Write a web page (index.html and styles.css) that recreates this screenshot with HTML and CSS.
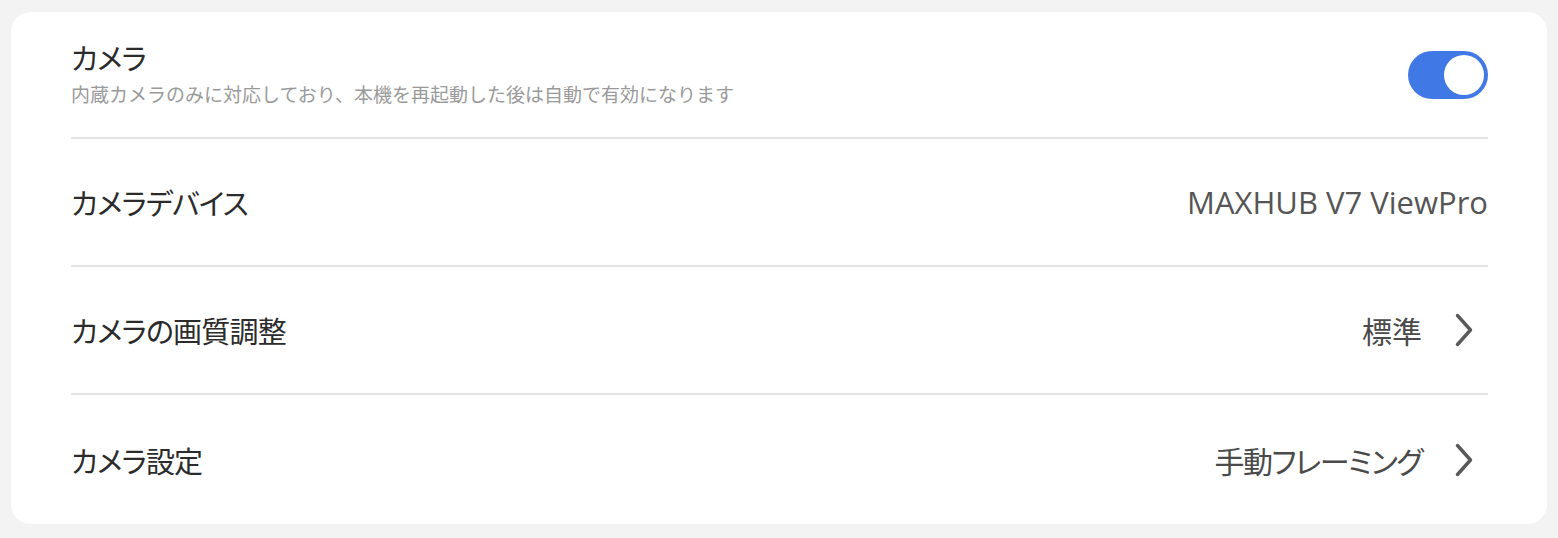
FILE: index.html
```html
<!DOCTYPE html>
<html lang="ja">
<head>
<meta charset="utf-8">
<link rel="stylesheet" href="styles.css">
</head>
<body>
<div class="card">
  <div class="row row-first">
    <div class="text-col">
      <div class="title">カメラ</div>
      <div class="subtitle">内蔵カメラのみに対応しており、本機を再起動した後は自動で有効になります</div>
    </div>
    <div class="toggle"><div class="knob"></div></div>
  </div>
  <div class="row">
    <div class="title">カメラデバイス</div>
    <div class="value latin">MAXHUB V7 ViewPro</div>
  </div>
  <div class="row">
    <div class="title">カメラの画質調整</div>
    <div class="value-wrap">
      <div class="value">標準</div>
      <svg class="chevron" width="20" height="34" viewBox="0 0 20 34"><path d="M3.5 2.5 L16.5 17 L3.5 31.5" fill="none" stroke="#5a5a5a" stroke-width="3.4" stroke-linecap="round" stroke-linejoin="round"/></svg>
    </div>
  </div>
  <div class="row row-last">
    <div class="title">カメラ設定</div>
    <div class="value-wrap">
      <div class="value narrow">手動フレーミング</div>
      <svg class="chevron" width="20" height="34" viewBox="0 0 20 34"><path d="M3.5 2.5 L16.5 17 L3.5 31.5" fill="none" stroke="#5a5a5a" stroke-width="3.4" stroke-linecap="round" stroke-linejoin="round"/></svg>
    </div>
  </div>
</div>
</body>
</html>
```

FILE: styles.css
```css
html, body {
  margin: 0;
  padding: 0;
  background: #f3f3f3;
}
body {
  padding: 12px 11px 14px 11px;
  font-family: "Noto Sans CJK JP", "Noto Sans", sans-serif;
  font-feature-settings: "palt";
}
.card {
  background: #ffffff;
  border-radius: 20px;
  padding: 0 59px 0 60px;
}
.row {
  display: flex;
  align-items: center;
  justify-content: space-between;
  height: 126px;
  border-bottom: 2px solid #e3e3e3;
}
.row-first {
  height: 125px;
}
.row-last {
  height: 129px;
  border-bottom: none;
}
.text-col {
  display: flex;
  flex-direction: column;
  gap: 4px;
  padding-bottom: 5px;
}
.title {
  font-size: 29px;
  line-height: 40px;
  color: #2b2b2b;
  letter-spacing: -0.8px;
}
.subtitle {
  font-size: 19px;
  line-height: 26px;
  color: #9a9a9a;
  font-feature-settings: normal;
}
.value {
  font-size: 30px;
  line-height: 40px;
  color: #4a4a4a;
}
.narrow {
  letter-spacing: -1.5px;
}
.latin {
  font-family: "Open Sans", "Noto Sans", sans-serif;
  font-size: 31px;
  color: #555555;
}
.value-wrap {
  display: flex;
  align-items: center;
}
.chevron {
  display: block;
  margin-left: 32px;
  margin-right: 14px;
}
.toggle {
  width: 80px;
  height: 48px;
  border-radius: 24px;
  background: #4079e6;
  display: flex;
  align-items: center;
  justify-content: flex-end;
  padding: 0 4px;
  box-sizing: border-box;
}
.knob {
  width: 40px;
  height: 40px;
  border-radius: 50%;
  background: #ffffff;
}
```
